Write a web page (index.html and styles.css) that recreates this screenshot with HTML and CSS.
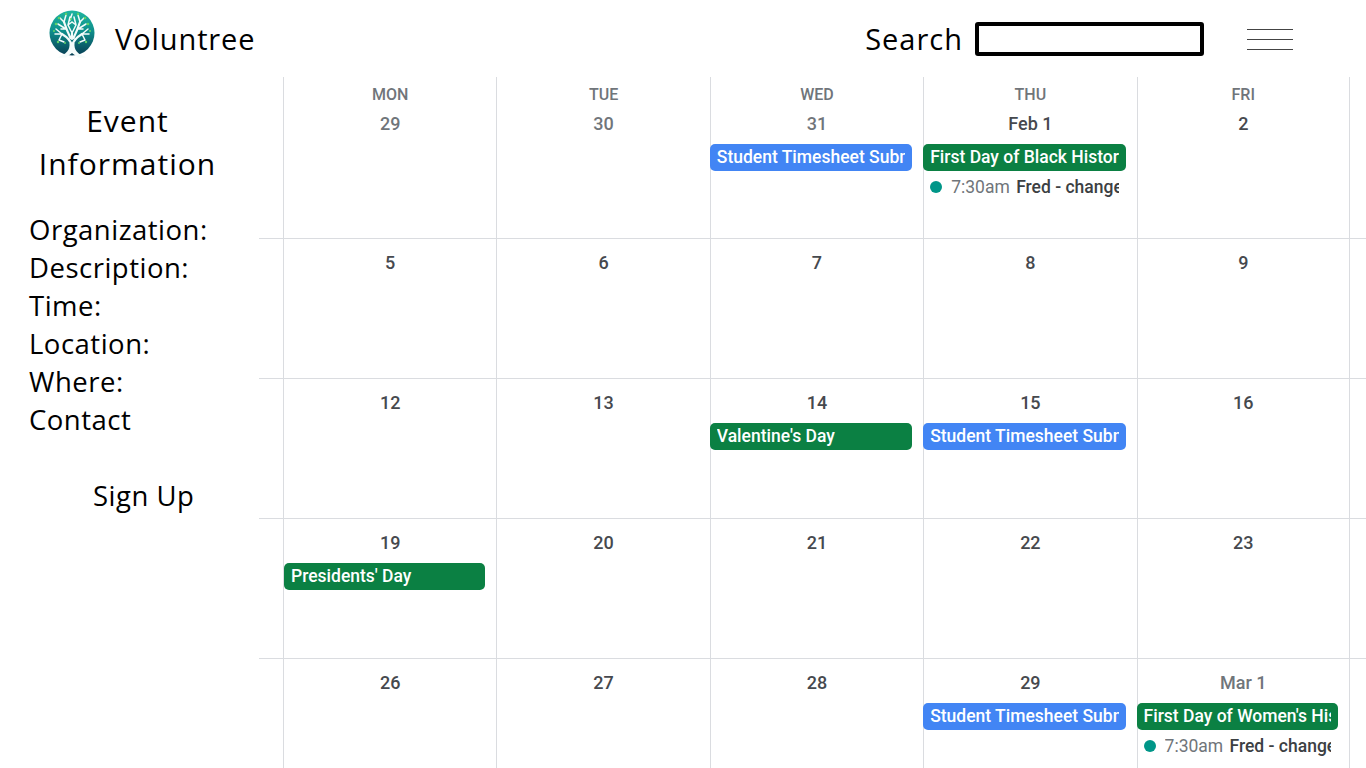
FILE: index.html
```html
<!DOCTYPE html>
<html lang="en">
<head>
    <meta charset="UTF-8">
    <meta name="viewport" content="width=device-width, initial-scale=1.0">
    <title>Voluntree</title>
    <link rel="stylesheet" href="styles.css">
</head>
<body>
    <header class="topbar">
        <div class="brand">
            <svg class="logo" viewBox="0 0 46 48" width="46" height="48" aria-label="Voluntree logo">
                <defs>
                    <linearGradient id="logoFill" x1="0" y1="0" x2="0" y2="1">
                        <stop offset="0" stop-color="#1fb5a0"/>
                        <stop offset="0.45" stop-color="#0f8f8c"/>
                        <stop offset="1" stop-color="#083f55"/>
                    </linearGradient>
                </defs>
                <circle cx="23" cy="23" r="22.500" fill="url(#logoFill)"/>
                <g fill="none" stroke="#f4fbfa" stroke-linecap="round">
                    <path stroke-width="2.200" d="M23 36 C22 31 18 27 13 24 M23 36 C24 31 28 27 33 24 M21.500 28 C19 23 17 18 15 12 M24.500 28 C27 23 29 18 31 12 M23 29 L23 23"/>
                    <path stroke-width="1.500" d="M13 24 L6 24 M13 24 L7 19 M13 24 L10 30 M15 12 L11 8 M15 12 L17 5 M17 19 L9 14 M17 19 L12 19 M33 24 L40 24 M33 24 L39 19 M33 24 L36 30 M31 12 L35 8 M31 12 L29 5 M29 19 L37 14 M29 19 L34 19 M23 23 L19 15 M23 23 L27 15 M19 15 L21 7 M27 15 L25 7 M21 10 L23 4 M19 15 L23 12 M27 15 L23 12 M10 30 L15 32 M36 30 L31 32"/>
                </g>
                <path d="M20.500 33 C21 40 18 44 8 47.500 L17 47.500 L23 43 L29 47.500 L38 47.500 C28 44 25 40 25.500 33 Z" fill="#f4fbfa"/>
                <g fill="#5fd068">
                    <circle cx="17" cy="4" r="1.200"/>
                    <circle cx="29" cy="4" r="1.200"/>
                    <circle cx="10" cy="8" r="1.300"/>
                    <circle cx="36" cy="8" r="1.300"/>
                    <circle cx="22" cy="9" r="1"/>
                    <circle cx="7" cy="14" r="1.300"/>
                    <circle cx="39" cy="14" r="1.300"/>
                    <circle cx="5" cy="21" r="1.100"/>
                    <circle cx="41" cy="21" r="1.100"/>
                    <circle cx="9" cy="32" r="1.200"/>
                    <circle cx="37" cy="32" r="1.200"/>
                    <circle cx="16" cy="33" r="1"/>
                    <circle cx="30" cy="33" r="1"/>
                </g>
            </svg>
            <span class="brand-name">Voluntree</span>
        </div>
        <div class="tools">
            <label class="search-label" for="search">Search</label>
            <input class="search-box" id="search" type="text">
            <div class="menu-icon">
                <span></span>
                <span></span>
                <span></span>
            </div>
        </div>
    </header>

    <div class="main">
        <!-- Event details -->
        <aside class="sidebar">
            <h2 class="event-title">Event<br>Information</h2>
            <ul class="event-fields">
                <li>Organization:</li>
                <li>Description:</li>
                <li>Time:</li>
                <li>Location:</li>
                <li>Where:</li>
                <li>Contact</li>
            </ul>
            <a class="signup" href="#">Sign Up</a>
        </aside>

        <!-- Calendar -->
        <section class="calendar">
            <div class="week week-first">
                <div class="day">
                    <div class="weekday">MON</div>
                    <div class="date muted">29</div>
                </div>
                <div class="day">
                    <div class="weekday">TUE</div>
                    <div class="date muted">30</div>
                </div>
                <div class="day">
                    <div class="weekday">WED</div>
                    <div class="date muted">31</div>
                    <div class="pill blue"><span>Student Timesheet Submission</span></div>
                </div>
                <div class="day">
                    <div class="weekday">THU</div>
                    <div class="date">Feb 1</div>
                    <div class="pill green"><span>First Day of Black History Month</span></div>
                    <div class="timed"><i class="dot"></i><span class="timed-text"><span class="time">7:30am</span> <b>Fred - change oil filter</b></span></div>
                </div>
                <div class="day">
                    <div class="weekday">FRI</div>
                    <div class="date">2</div>
                </div>
            </div>
            <div class="week">
                <div class="day"><div class="date">5</div></div>
                <div class="day"><div class="date">6</div></div>
                <div class="day"><div class="date">7</div></div>
                <div class="day"><div class="date">8</div></div>
                <div class="day"><div class="date">9</div></div>
            </div>
            <div class="week">
                <div class="day"><div class="date">12</div></div>
                <div class="day"><div class="date">13</div></div>
                <div class="day">
                    <div class="date">14</div>
                    <div class="pill green"><span>Valentine's Day</span></div>
                </div>
                <div class="day">
                    <div class="date">15</div>
                    <div class="pill blue"><span>Student Timesheet Submission</span></div>
                </div>
                <div class="day"><div class="date">16</div></div>
            </div>
            <div class="week">
                <div class="day">
                    <div class="date">19</div>
                    <div class="pill green"><span>Presidents' Day</span></div>
                </div>
                <div class="day"><div class="date">20</div></div>
                <div class="day"><div class="date">21</div></div>
                <div class="day"><div class="date">22</div></div>
                <div class="day"><div class="date">23</div></div>
            </div>
            <div class="week">
                <div class="day"><div class="date">26</div></div>
                <div class="day"><div class="date">27</div></div>
                <div class="day"><div class="date">28</div></div>
                <div class="day">
                    <div class="date">29</div>
                    <div class="pill blue"><span>Student Timesheet Submission</span></div>
                </div>
                <div class="day">
                    <div class="date muted">Mar 1</div>
                    <div class="pill green"><span>First Day of Women's History Month</span></div>
                    <div class="timed"><i class="dot"></i><span class="timed-text"><span class="time">7:30am</span> <b>Fred - change oil filter</b></span></div>
                </div>
            </div>
        </section>
    </div>
</body>
</html>
```

FILE: styles.css
```css
html, body {
    height: 100%;
}
body {
    margin: 0;
    padding: 0;
    background-color: #fff;
    color: #000;
    font-family: "Open Sans", Arial, sans-serif;
    overflow: hidden;
}

/* top bar */
.topbar {
    display: flex;
    justify-content: space-between;
    align-items: center;
    height: 77px;
    padding: 0 73px 0 49px;
    box-sizing: border-box;
}
.brand {
    display: flex;
    align-items: center;
    gap: 20px;
}
.logo {
    display: block;
    margin-bottom: 9px;
}
.brand-name {
    font-size: 29px;
    letter-spacing: 0.900px;
}
.tools {
    display: flex;
    align-items: center;
}
.search-label {
    font-size: 29px;
    letter-spacing: 1px;
    margin-right: 12px;
}
.search-box {
    width: 229px;
    height: 34px;
    box-sizing: border-box;
    padding: 0;
    border: 4px solid #000;
    border-radius: 3px;
    background: #fff;
}
.menu-icon {
    display: flex;
    flex-direction: column;
    gap: 9px;
    width: 46px;
    margin: 2px 0 0 43px;
}
.menu-icon span {
    display: block;
    height: 1px;
    background-color: #444;
}

/* layout */
.main {
    display: flex;
    height: 691px;
    overflow: hidden;
}
.sidebar {
    flex: 0 0 259px;
    box-sizing: border-box;
    padding: 22px 0 0 29px;
}
.event-title {
    width: 197px;
    margin: 0 0 26px;
    font-size: 30px;
    font-weight: 400;
    line-height: 43px;
    letter-spacing: 1px;
    text-align: center;
}
.event-fields {
    list-style: none;
    margin: 0 0 38px;
    padding: 0;
    font-size: 27.500px;
    line-height: 38px;
    letter-spacing: 0.500px;
}
.signup {
    display: block;
    margin-left: 64px;
    color: #000;
    font-size: 27.500px;
    line-height: 38px;
    letter-spacing: 0.500px;
    text-decoration: none;
}

/* calendar */
.calendar {
    flex: 1;
    min-width: 0;
    font-family: Roboto, Arial, sans-serif;
}
.week {
    display: grid;
    grid-template-columns: repeat(5, 213.4px);
    height: 140px;
    box-sizing: border-box;
    padding-left: 24px;
    border-bottom: 1px solid #dadce0;
}
.week-first {
    height: 162px;
}
.day {
    min-width: 0;
    padding-top: 14px;
    border-left: 1px solid #dadce0;
}
.week-first .day {
    padding-top: 8px;
}
.day:last-child {
    border-right: 1px solid #dadce0;
}
.day:nth-child(n+3) .pill {
    margin-left: -1px;
}
.weekday {
    margin-bottom: 9px;
    color: #70757a;
    font-size: 16px;
    font-weight: 500;
    line-height: 20px;
    text-align: center;
}
.date {
    color: #46494e;
    font-size: 18px;
    font-weight: 500;
    line-height: 20px;
    text-align: center;
}
.date.muted {
    color: #70757a;
}
.pill {
    box-sizing: border-box;
    height: 27px;
    margin: 10px 11px 0 0;
    padding: 0 7px 0 7px;
    border-radius: 5px;
    color: #fff;
    font-size: 17.500px;
    font-weight: 500;
    line-height: 26px;
}
.pill span {
    display: block;
    overflow: hidden;
    white-space: nowrap;
}
.pill.blue {
    background-color: #4285f4;
}
.pill.green {
    background-color: #0b8043;
}
.timed {
    display: flex;
    align-items: center;
    height: 20px;
    margin: 6px 18px 0 6px;
    font-size: 17.500px;
}
.dot {
    flex: none;
    width: 12px;
    height: 12px;
    margin-right: 9px;
    border-radius: 50%;
    background-color: #009688;
}
.timed-text {
    overflow: hidden;
    white-space: nowrap;
}
.time {
    color: #70757a;
}
.timed b {
    margin-left: 2px;
    color: #3c4043;
    font-weight: 500;
}
```
